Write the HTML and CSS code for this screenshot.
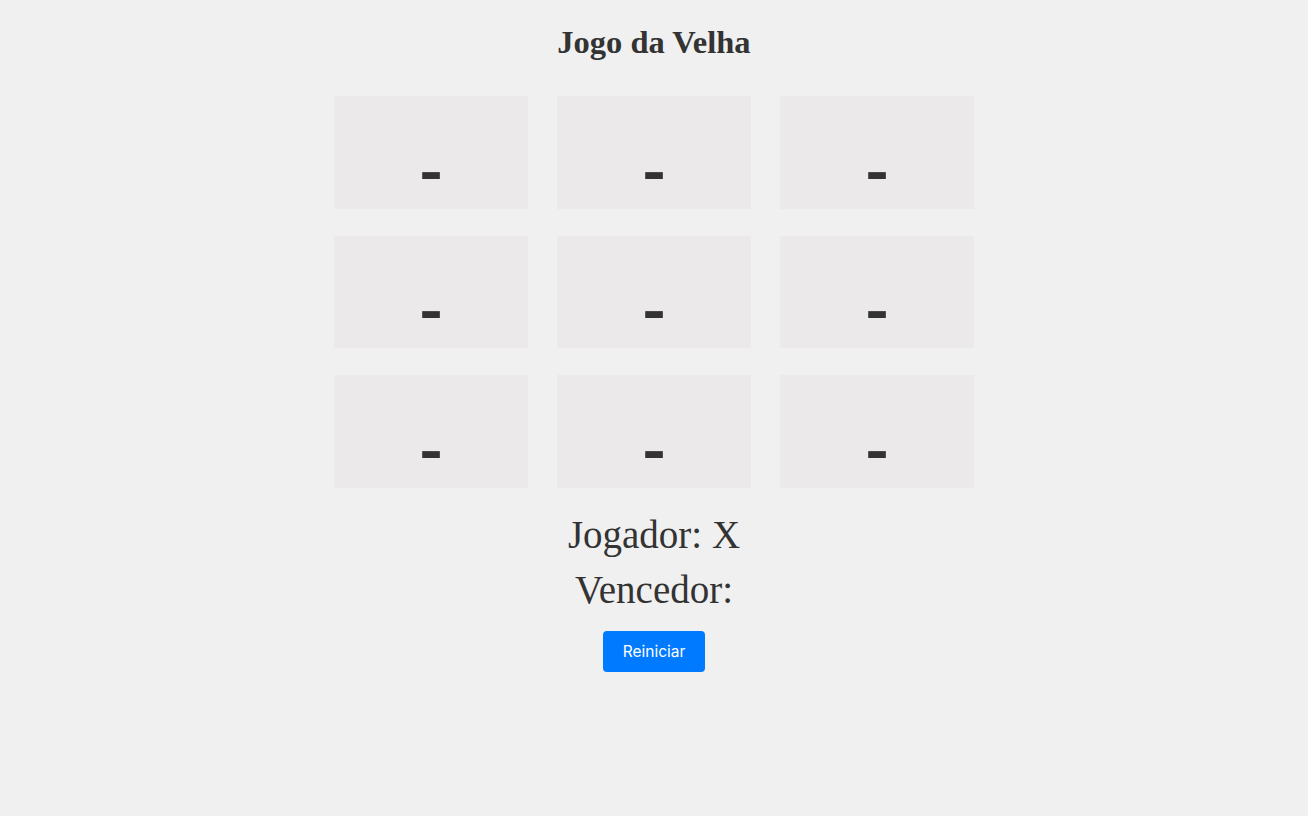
FILE: index.html
```html
<!DOCTYPE html>
<html lang="pt">
<head>
<meta charset="utf-8">
<title>Jogo da Velha</title>
<link rel="stylesheet" href="styles.css">
</head>
<body>
<main class="app">
  <h1 class="title">Jogo da Velha</h1>
  <div class="board">
    <div class="cell">-</div>
    <div class="cell">-</div>
    <div class="cell">-</div>
    <div class="cell">-</div>
    <div class="cell">-</div>
    <div class="cell">-</div>
    <div class="cell">-</div>
    <div class="cell">-</div>
    <div class="cell">-</div>
  </div>
  <p class="status">Jogador: X</p>
  <p class="status">Vencedor: </p>
  <button class="reset" type="button">Reiniciar</button>
</main>
</body>
</html>
```
FILE: styles.css
```css
html, body {
  margin: 0;
  padding: 0;
}
body {
  background: #f0f0f0;
  color: #333;
  font-family: "Liberation Serif", "Times New Roman", serif;
  min-height: 816px;
}
.app {
  display: flex;
  flex-direction: column;
  align-items: center;
  padding-top: 22px;
}
.title {
  margin: 0 0 34px;
  font-size: 32.5px;
  font-weight: bold;
  line-height: 40px;
}
.board {
  display: grid;
  grid-template-columns: repeat(3, 194px);
  grid-auto-rows: 112.5px;
  column-gap: 29px;
  row-gap: 27px;
}
.cell {
  background: #ebe9e9;
  display: flex;
  justify-content: center;
  align-items: flex-end;
  font-family: "Open Sans", sans-serif;
  font-weight: 600;
  font-size: 70px;
  line-height: 1;
  padding-bottom: 6px;
  box-sizing: border-box;
  color: #333;
}
.status {
  margin: 0;
  font-size: 39px;
  line-height: 55px;
}
.board + .status {
  margin-top: 19px;
}
.reset {
  margin-top: 14px;
  width: 102px;
  height: 41px;
  border: none;
  border-radius: 4px;
  background: #007bff;
  color: #fff;
  font-family: "Inter", "Roboto", sans-serif;
  font-size: 15.5px;
  cursor: pointer;
}
```
